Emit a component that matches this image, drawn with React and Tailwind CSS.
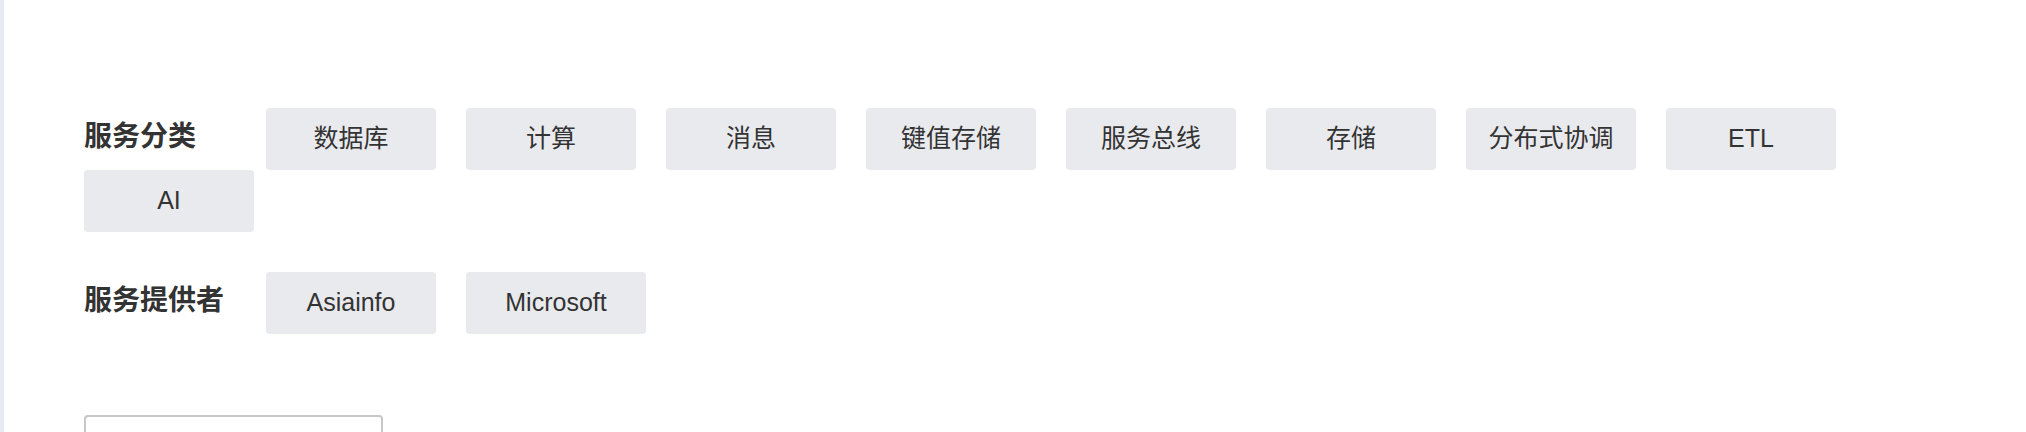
const CATEGORIES = ['数据库', '计算', '消息', '键值存储', '服务总线', '存储', '分布式协调', 'ETL', 'AI']
const PROVIDERS = ['Asiainfo', 'Microsoft']

// One filter row: bold label, then wrapping tag buttons.
function FilterRow({ label, items }) {
  return (
    <div className="mb-[40px] flex flex-wrap items-start">
      <div className="w-[182px] pt-[15px] text-[28px] font-bold leading-[28px] text-[#333]">
        {label}
      </div>
      {items.map((item) => (
        <button
          key={item}
          type="button"
          className={
            'mr-[30px] flex h-[62px] min-w-[170px] items-center justify-center rounded-[4px] bg-[#e9eaee] px-[20px] text-[25px] text-[#333] ' +
            (item === 'Microsoft' ? 'w-[180px]' : '')
          }
        >
          {item}
        </button>
      ))}
    </div>
  )
}

export default function App() {
  return (
    <div
      className="min-h-[432px] overflow-hidden border-l-4 border-[#e8eaf3] bg-white pl-[80px] pt-[108px]"
      style={{ fontFamily: '"Liberation Sans", "Noto Sans CJK SC", sans-serif' }}
    >
      <FilterRow label="服务分类" items={CATEGORIES} />
      <FilterRow label="服务提供者" items={PROVIDERS} />
      <div className="mt-[81px] h-[60px] w-[299px] rounded-[4px] border-2 border-[#c8c8c8]" />
    </div>
  )
}
